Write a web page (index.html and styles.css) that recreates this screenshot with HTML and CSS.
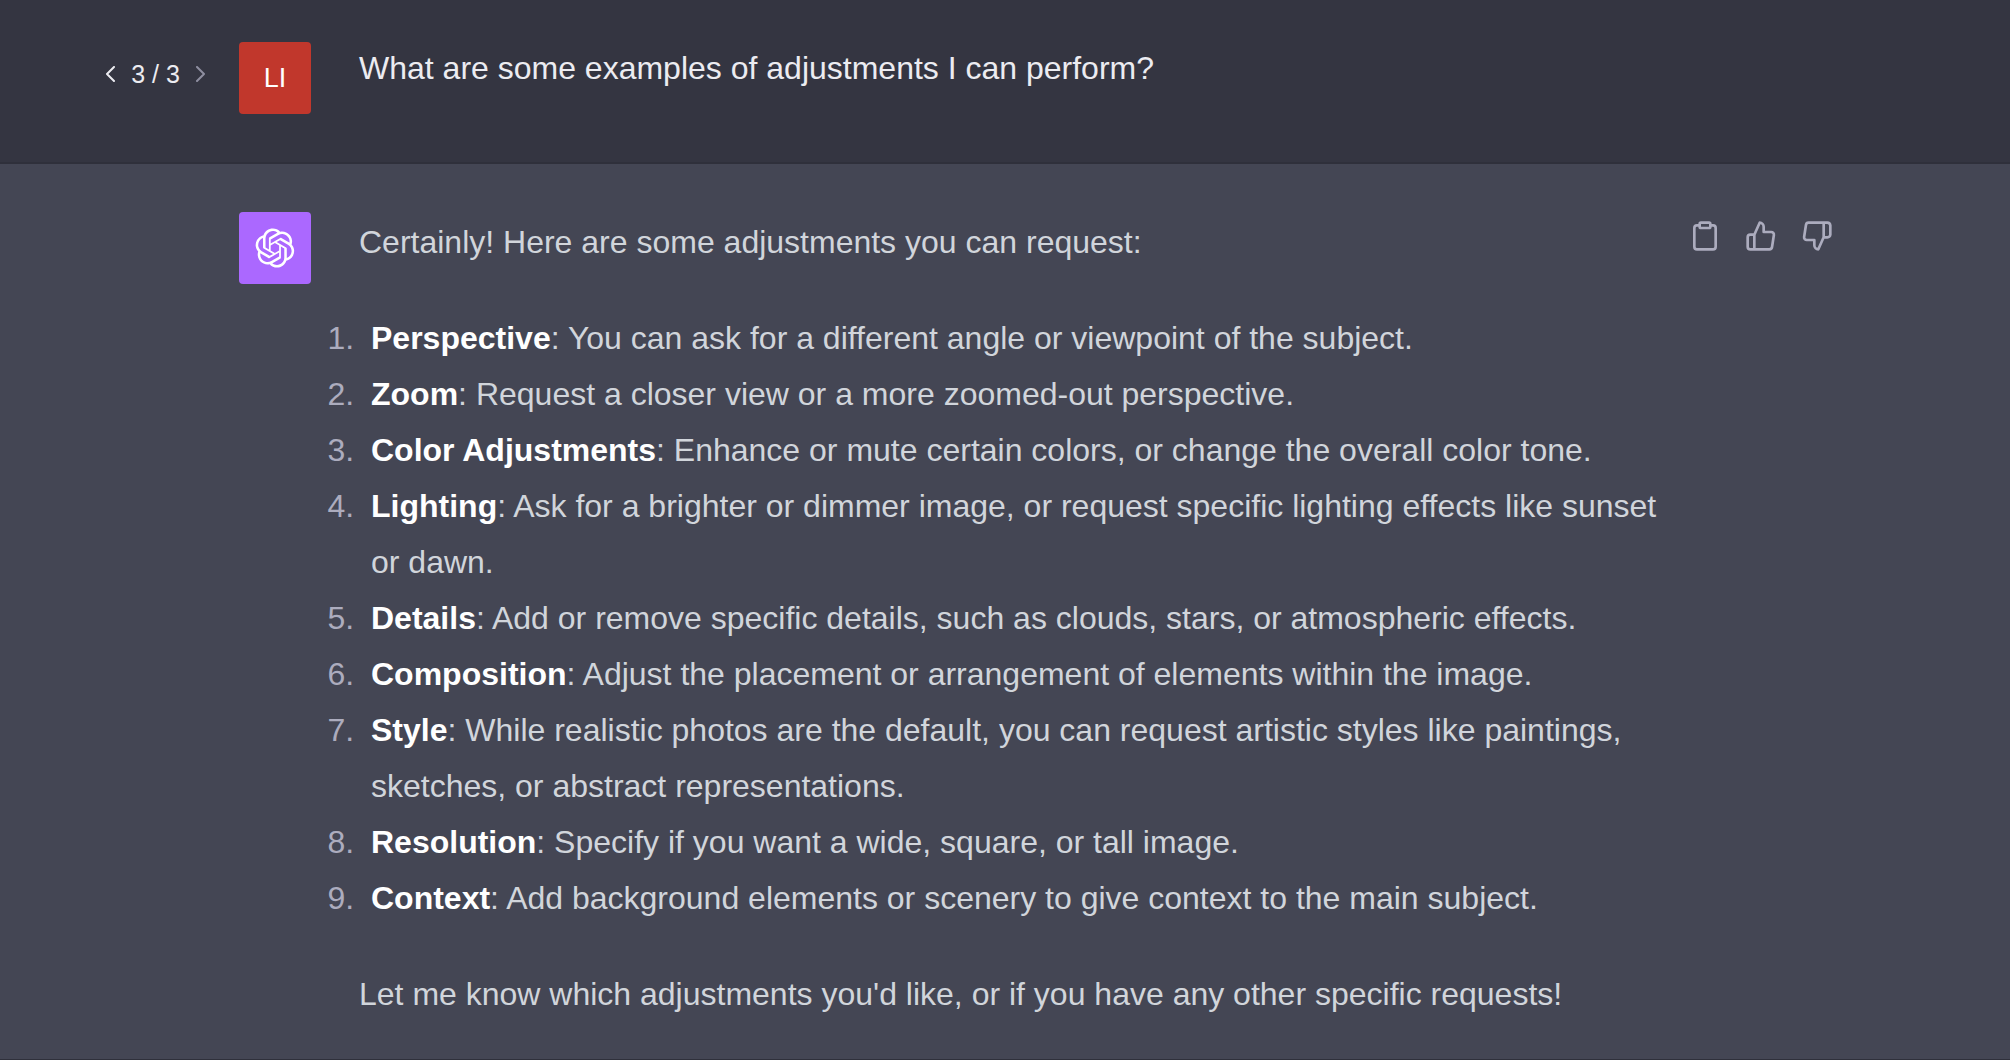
FILE: index.html
```html
<!DOCTYPE html>
<html lang="en">
<head>
<meta charset="utf-8">
<title>Image adjustments</title>
<link rel="stylesheet" href="styles.css">
</head>
<body>
<main class="thread">
  <article class="message message-user">
    <nav class="pager" aria-label="Message versions">
      <button class="pager-button" type="button" aria-label="Previous version">
        <svg class="chevron" viewBox="0 0 10 16"><polyline points="8 1 1 8 8 15"/></svg>
      </button>
      <span class="pager-count">3 / 3</span>
      <button class="pager-button" type="button" aria-label="Next version" disabled>
        <svg class="chevron" viewBox="0 0 10 16"><polyline points="2 1 9 8 2 15"/></svg>
      </button>
    </nav>
    <div class="avatar avatar-user">LI</div>
    <div class="content">
      <p>What are some examples of adjustments I can perform?</p>
    </div>
  </article>

  <article class="message message-assistant">
    <div class="avatar avatar-assistant">
      <svg class="logo" viewBox="0 0 41 41"><path d="M37.5324 16.8707C37.9808 15.5241 38.1363 14.0974 37.9886 12.6859C37.8409 11.2744 37.3934 9.91076 36.676 8.68622C35.6126 6.83404 33.9882 5.3676 32.0373 4.4985C30.0864 3.62941 27.9098 3.40259 25.8215 3.85078C24.8796 2.7893 23.7219 1.94125 22.4257 1.36341C21.1295 0.785575 19.7249 0.491269 18.3058 0.500197C16.1708 0.495044 14.0893 1.16803 12.3614 2.42214C10.6335 3.67624 9.34853 5.44666 8.6917 7.47815C7.30085 7.76286 5.98686 8.3414 4.8377 9.17505C3.68854 10.0087 2.73073 11.0782 2.02839 12.312C0.956464 14.1591 0.498905 16.2988 0.721698 18.4228C0.944492 20.5467 1.83612 22.5449 3.268 24.1293C2.81966 25.4759 2.66413 26.9026 2.81182 28.3141C2.95951 29.7256 3.40701 31.0892 4.12437 32.3138C5.18791 34.1659 6.8123 35.6322 8.76321 36.5013C10.7141 37.3704 12.8907 37.5973 14.9789 37.1492C15.9208 38.2107 17.0786 39.0587 18.3747 39.6366C19.6709 40.2144 21.0755 40.5087 22.4946 40.4998C24.6307 40.5054 26.7133 39.8321 28.4418 38.5772C30.1704 37.3223 31.4556 35.5506 32.1119 33.5179C33.5027 33.2332 34.8167 32.6547 35.9659 31.821C37.115 30.9874 38.0728 29.9178 38.7752 28.684C39.8458 26.8371 40.3023 24.6979 40.0789 22.5748C39.8556 20.4517 38.9639 18.4544 37.5324 16.8707ZM22.4978 37.8849C20.7443 37.8874 19.0459 37.2733 17.6994 36.1501C17.7601 36.117 17.8666 36.0586 17.936 36.0161L25.9004 31.4156C26.1003 31.3019 26.2663 31.137 26.3813 30.9378C26.4964 30.7386 26.5563 30.5124 26.5549 30.2825V19.0542L29.9213 20.998C29.9389 21.0068 29.9541 21.0198 29.9656 21.0359C29.977 21.052 29.9842 21.0707 29.9867 21.0902V30.3889C29.9842 32.375 29.1946 34.2791 27.7909 35.6841C26.3872 37.0892 24.4838 37.8806 22.4978 37.8849ZM6.39227 31.0064C5.51397 29.4888 5.19742 27.7107 5.49804 25.9832C5.55718 26.0187 5.66048 26.0818 5.73461 26.1244L13.699 30.7248C13.8975 30.8408 14.1233 30.902 14.3532 30.902C14.583 30.902 14.8088 30.8408 15.0073 30.7248L24.731 25.1103V28.9979C24.7321 29.0177 24.7283 29.0376 24.7199 29.0556C24.7115 29.0736 24.6988 29.0893 24.6829 29.1012L16.6317 33.7497C14.9096 34.7416 12.8643 35.0097 10.9447 34.4954C9.02506 33.9811 7.38785 32.7263 6.39227 31.0064ZM4.29707 13.6194C5.17156 12.0998 6.55279 10.9364 8.19885 10.3327C8.19885 10.4013 8.19491 10.5228 8.19491 10.6071V19.808C8.19351 20.0378 8.25334 20.2638 8.36823 20.4629C8.48312 20.6619 8.64893 20.8267 8.84863 20.9404L18.5723 26.5542L15.206 28.4979C15.1894 28.5089 15.1703 28.5155 15.1505 28.5173C15.1307 28.5191 15.1107 28.516 15.0924 28.5082L7.04046 23.8557C5.32135 22.8601 4.06716 21.2235 3.55289 19.3046C3.03862 17.3858 3.30624 15.3413 4.29707 13.6194ZM31.955 20.0556L22.2312 14.4411L25.5976 12.4981C25.6142 12.4872 25.6333 12.4805 25.6531 12.4787C25.6729 12.4769 25.6928 12.4801 25.7111 12.4879L33.7631 17.1364C34.9967 17.849 36.0017 18.8982 36.6606 20.1613C37.3194 21.4244 37.6047 22.849 37.4832 24.2684C37.3617 25.6878 36.8382 27.0432 35.9743 28.1759C35.1103 29.3086 33.9415 30.1717 32.6047 30.6641C32.6047 30.5947 32.6047 30.4733 32.6047 30.3889V21.188C32.6066 20.9586 32.5474 20.7328 32.4332 20.5338C32.319 20.3348 32.154 20.1698 31.955 20.0556ZM35.3055 15.0128C35.2464 14.9765 35.1431 14.9142 35.069 14.8717L27.1045 10.2712C26.906 10.1554 26.6803 10.0943 26.4504 10.0943C26.2206 10.0943 25.9948 10.1554 25.7963 10.2712L16.0726 15.8858V11.9982C16.0715 11.9783 16.0753 11.9585 16.0837 11.9405C16.0921 11.9225 16.1048 11.9068 16.1207 11.8949L24.1719 7.25025C25.4053 6.53903 26.8158 6.19376 28.2383 6.25482C29.6608 6.31589 31.0364 6.78077 32.2044 7.59508C33.3723 8.40939 34.2842 9.53945 34.8334 10.8531C35.3826 12.1667 35.5464 13.6095 35.3055 15.0128ZM14.2424 21.9419L10.8752 19.9981C10.8576 19.9893 10.8423 19.9763 10.8309 19.9602C10.8195 19.9441 10.8122 19.9254 10.8098 19.9058V10.6071C10.8107 9.18295 11.2173 7.78848 11.9819 6.58696C12.7466 5.38544 13.8377 4.42659 15.1275 3.82264C16.4173 3.21869 17.8524 2.99464 19.2649 3.1767C20.6775 3.35876 22.0089 3.93941 23.1034 4.85067C23.0427 4.88379 22.937 4.94215 22.8668 4.98473L14.9024 9.58517C14.7025 9.69878 14.5366 9.86356 14.4215 10.0626C14.3065 10.2616 14.2466 10.4877 14.2479 10.7175L14.2424 21.9419ZM16.071 17.9991L20.4018 15.4978L24.7325 17.9975V22.9985L20.4018 25.4983L16.071 22.9985V17.9991Z"/></svg>
    </div>
    <div class="content">
      <p>Certainly! Here are some adjustments you can request:</p>
      <ol class="list">
        <li><strong>Perspective</strong>: You can ask for a different angle or viewpoint of the subject.</li>
        <li><strong>Zoom</strong>: Request a closer view or a more zoomed-out perspective.</li>
        <li><strong>Color Adjustments</strong>: Enhance or mute certain colors, or change the overall color tone.</li>
        <li><strong>Lighting</strong>: Ask for a brighter or dimmer image, or request specific lighting effects like sunset or dawn.</li>
        <li><strong>Details</strong>: Add or remove specific details, such as clouds, stars, or atmospheric effects.</li>
        <li><strong>Composition</strong>: Adjust the placement or arrangement of elements within the image.</li>
        <li><strong>Style</strong>: While realistic photos are the default, you can request artistic styles like paintings, sketches, or abstract representations.</li>
        <li><strong>Resolution</strong>: Specify if you want a wide, square, or tall image.</li>
        <li><strong>Context</strong>: Add background elements or scenery to give context to the main subject.</li>
      </ol>
      <p>Let me know which adjustments you'd like, or if you have any other specific requests!</p>
    </div>
    <div class="actions">
      <button class="action" type="button" aria-label="Copy">
        <svg class="icon" viewBox="0 0 24 24"><path d="M16 4h2a2 2 0 0 1 2 2v14a2 2 0 0 1-2 2H6a2 2 0 0 1-2-2V6a2 2 0 0 1 2-2h2"/><rect x="8" y="2" width="8" height="4" rx="1"/></svg>
      </button>
      <button class="action" type="button" aria-label="Good response">
        <svg class="icon" viewBox="0 0 24 24"><path d="M14 9V5a3 3 0 0 0-3-3l-4 9v11h11.28a2 2 0 0 0 2-1.7l1.38-9a2 2 0 0 0-2-2.3zM7 22H4a2 2 0 0 1-2-2v-7a2 2 0 0 1 2-2h3"/></svg>
      </button>
      <button class="action" type="button" aria-label="Bad response">
        <svg class="icon" viewBox="0 0 24 24"><path d="M10 15v4a3 3 0 0 0 3 3l4-9V2H5.72a2 2 0 0 0-2 1.7l-1.38 9a2 2 0 0 0 2 2.3zm7-13h2.67A2.31 2.31 0 0 1 22 4v7a2.31 2.31 0 0 1-2.33 2H17"/></svg>
      </button>
    </div>
  </article>
</main>
</body>
</html>
```
FILE: styles.css
```css
* {
  box-sizing: border-box;
}

body {
  margin: 0;
  background: #444654;
  color: #d1d5db;
  font-family: "Liberation Sans", Arial, sans-serif;
  font-size: 32px;
  line-height: 56px;
}

.message {
  display: grid;
  grid-template-columns: 103px 72px minmax(0, 1fr) 144px;
  column-gap: 32px;
  padding: 48px 177px 37px 104px;
  border-bottom: 1px solid #2f303b;
}

.message-user {
  padding-top: 40px;
  padding-bottom: 48px;
  border-bottom-width: 2px;
  background: #343541;
  color: #ececf1;
}

.message-user .avatar {
  margin-top: 2px;
}

.message p {
  margin: 0;
}

.pager {
  display: flex;
  align-items: center;
  justify-content: space-between;
  height: 68px;
}

.pager-count {
  font-size: 25px;
}

.pager-button,
.action {
  display: flex;
  padding: 0;
  border: 0;
  background: none;
  color: inherit;
}

.pager-button:disabled {
  color: #8e8ea0;
}

.chevron {
  width: 14px;
  height: 16px;
  fill: none;
  stroke: currentColor;
  stroke-width: 2;
  stroke-linecap: round;
  stroke-linejoin: round;
}

.avatar {
  display: flex;
  grid-column: 2;
  align-items: center;
  justify-content: center;
  height: 72px;
  border-radius: 4px;
  color: #fff;
  font-size: 27px;
}

.avatar-user {
  background: #c1372c;
}

.avatar-assistant {
  background: #ab68ff;
}

.logo {
  width: 40px;
  height: 40px;
  fill: #fff;
}

.content {
  padding-left: 16px;
}

.message-assistant .content {
  padding-top: 2px;
}

.list {
  margin: 40px 0;
  padding-left: 4px;
}

.list li {
  padding-left: 8px;
}

.list li::marker {
  color: #acacbe;
}

.list strong {
  color: #fff;
}

.actions {
  display: flex;
  gap: 24px;
  align-items: center;
  height: 48px;
}

.action {
  color: #acacbe;
}

.icon {
  width: 32px;
  height: 32px;
  fill: none;
  stroke: currentColor;
  stroke-width: 2;
  stroke-linecap: round;
  stroke-linejoin: round;
}
```
